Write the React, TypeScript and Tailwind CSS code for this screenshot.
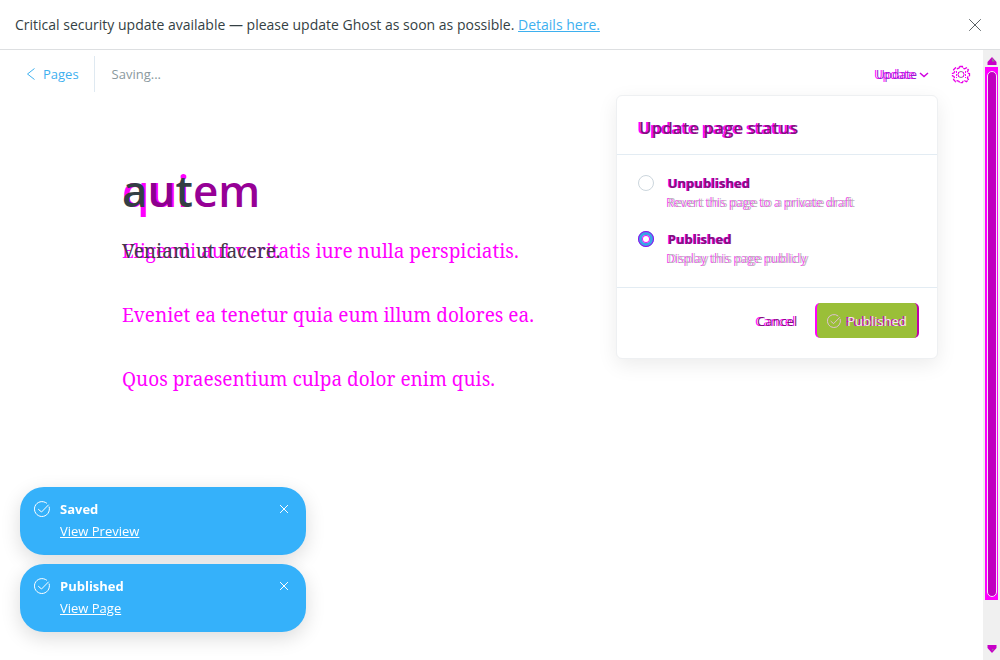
import React from "react";

const sans = "font-['Open_Sans','Noto_Sans',sans-serif]";
const serif = "font-['Noto_Serif','DejaVu_Serif','Liberation_Serif',serif]";

function Cross({ className }: { className: string }) {
  return (
    <svg viewBox="0 0 12 12" fill="none" stroke="currentColor" className={className} aria-hidden="true">
      <path d="M.5.5l11 11M11.5.5l-11 11" strokeLinecap="round" vectorEffect="non-scaling-stroke" />
    </svg>
  );
}

function CheckCircle({ className }: { className: string }) {
  return (
    <svg viewBox="0 0 16 16" fill="none" stroke="currentColor" strokeLinecap="round" strokeLinejoin="round" className={className} aria-hidden="true">
      <path d="M15.2 6A7.5 7.5 0 1 1 12.6 2.1" />
      <path d="M4.5 8.4l3 2.6L14.4 4" />
    </svg>
  );
}

function Gear() {
  return (
    <svg viewBox="0 0 20 20" fill="none" className="size-5" aria-hidden="true">
      <path
        d="M8.6 2.5h2.8l.5 1.700 1.700.7 1.800-1 2 2-1 1.800.7 1.500 1.400.5v2.200l-1.400.5-.7 1.500 1 1.800-2 2-1.800-1-1.700.7-.5 1.300H8.600l-.5-1.300-1.700-.7-1.800 1-2-2 1-1.800-.7-1.500-1.400-.5V9.500l1.400-.5.7-1.500-1-1.800 2-2 1.800 1 1.700-.7z"
        stroke="#e800e8"
        strokeWidth="1.300"
        strokeDasharray="4 1"
      />
      <circle cx="10" cy="10.500" r="3" stroke="#9a60a0" />
      <path d="M5.500 7v7M14.500 7v7M7.500 8v5M12.500 8v5" stroke="#f0f" strokeDasharray="2 1" />
    </svg>
  );
}

function Toast({ title, link }: { title: string; link: string }) {
  return (
    <div className="flex items-start rounded-3xl bg-[#35b1fa] px-3.5 pt-[11px] pb-[13px] text-white shadow-[0_6px_20px_rgba(0,0,0,0.14)]">
      <CheckCircle className="mt-[3px] size-4" />
      <div className="ml-2.5 flex-1 text-[13px] leading-[22px]">
        <p className="font-bold">{title}</p>
        <a href="#" className="underline">{link}</a>
      </div>
      <button type="button" aria-label="Dismiss" className="mt-[7px] mr-1">
        <Cross className="size-2" />
      </button>
    </div>
  );
}

function Option({ id, title, text, checked }: { id: string; title: string; text: string; checked?: boolean }) {
  return (
    <div className="flex gap-3.5">
      <input
        type="radio"
        name="status"
        id={id}
        defaultChecked={checked}
        className="mt-px size-4 appearance-none rounded-full border border-[#ccd6dd] bg-white checked:border-4 checked:border-[#3ba4e6] checked:outline checked:outline-[#a000f0] checked:-outline-offset-1 checked:shadow-[inset_0_0_0_1px_#f0f]"
      />
      <label htmlFor={id} className="text-[12px] leading-[19px]">
        <span className="block text-[13px] font-bold text-[#7d147d] [text-shadow:-1px_0_#f0f]">{title}</span>
        <span className="block text-[#bdb8c0] [text-shadow:-2px_0_#f050f0]">{text}</span>
      </label>
    </div>
  );
}

function StatusMenu() {
  return (
    <form className="absolute top-full right-0 mt-[3px] w-[322px] rounded-md border border-[#eef0f2] bg-white shadow-[0_6px_20px_rgba(0,0,0,0.08)]">
      <h2 className="border-b border-[#e3ecf3] px-[22px] pt-5 pb-3.5 text-[17px] leading-6 font-semibold text-[#7d147d] [text-shadow:-2px_0_#f0f]">
        Update page status
      </h2>
      <div className="flex flex-col gap-[18px] px-[21px] py-[19px]">
        <Option id="unpublished" title="Unpublished" text="Revert this page to a private draft" />
        <Option id="published" title="Published" text="Display this page publicly" checked />
      </div>
      <div className="flex items-center justify-end gap-[18px] border-t border-[#e3ecf3] px-[18px] pt-[15px] pb-5 text-[13px]">
        <button type="button" className="text-[#7d147d] [text-shadow:-2px_0_#f0f]">Cancel</button>
        <button type="button" className="flex h-[35px] items-center gap-1.5 rounded-[5px] border-x-2 border-r-[#c000a8] border-l-[#f0f] bg-[#9abf38] px-2.5 text-[#f4e6f4] [text-shadow:-2px_0_#d000c0]">
          <CheckCircle className="size-3.5 text-[#e8c0e8]" />
          Published
        </button>
      </div>
    </form>
  );
}

function Scrollbar() {
  return (
    <div className="flex w-[17px] flex-col items-center bg-[#f0f0f0]" aria-hidden="true">
      <svg viewBox="0 0 10 8" className="mt-[7px] mb-0.5 h-2 w-2.5"><path d="M5 0l4.500 5v3h-9V5z" fill="#c800c8" /><path d="M5 1l3 3.500H5z" fill="#888" /></svg>
      <div className="flex w-[13px] flex-[532] flex-col items-center bg-[#f0f] pt-1 pb-[3px]">
        <div className="w-2.5 flex-1 rounded-full border border-[#f5e8f5] bg-[#c000c0]" />
      </div>
      <div className="flex-[46]" />
      <svg viewBox="0 0 10 8" className="mb-[7px] h-2 w-2.5"><path d="M.5 0h9v3L5 8 .5 3z" fill="#c800c8" /><path d="M5 4h2L5 6z" fill="#888" /></svg>
    </div>
  );
}

export default function App() {
  return (
    <div className={`${sans} flex min-h-screen flex-col bg-white text-[#343f44]`}>
      <div className="flex items-center justify-between border-b border-[#dddfe1] py-3 pr-[19px] pl-[15px] text-[14px] leading-[25px]">
        <p>
          Critical security update available — please update Ghost as soon as possible.{" "}
          <a href="#" className="text-[#3eb0ef] underline">Details here.</a>
        </p>
        <button type="button" aria-label="Close"><Cross className="size-3 text-[#5b6266]" /></button>
      </div>
      <div className="flex flex-1">
        <main className="min-w-0 flex-1">
          <header className="flex items-center pt-1.5 text-[13px] leading-5">
            <a href="#" className="flex h-9 items-center gap-2 border-r border-[#dfe9f1] pr-[15px] pl-[27px] text-[#3eb0ef]">
              <svg viewBox="0 0 8 12" fill="none" stroke="currentColor" className="h-3 w-2" aria-hidden="true"><path d="M7.500.5l-7 5.500 7 5.500" /></svg>
              Pages
            </a>
            <span className="flex-1 pl-[17px] text-[#8a999e]">Saving...</span>
            <div className="relative mr-[45px]">
              <button type="button" className="mr-[9px] flex h-9 items-center gap-0.5 pt-0.5 text-[12px] text-[#9020d0] [text-shadow:-2px_0_#f0f]">
                Update
                <svg viewBox="0 0 10 6" fill="none" stroke="#d000e0" strokeWidth="1.500" className="h-1.5 w-2.5" aria-hidden="true"><path d="M1 1l4 3.500L9 1" /></svg>
              </button>
              <StatusMenu />
            </div>
            <button type="button" aria-label="Settings" className="-ml-8 mr-3"><Gear /></button>
          </header>
          <article className="px-[122px] pt-[68px]">
            <h1 className="grid text-[44px] leading-[60px] font-semibold">
              <span className="[grid-area:1/1] text-[#f0f]">qui</span>
              <span className="[grid-area:1/1]">a<span className="text-[#8d008d]">u</span>t<span className="text-[#960096]">em</span></span>
            </h1>
            <div className={`${serif} mt-[15px] text-[19px] leading-8 text-[#f0f]`}>
              <div className="grid">
                <p className="[grid-area:1/1]">Eligendi aut veritatis iure nulla perspiciatis.</p>
                <p className="[grid-area:1/1] text-[#443a4a]">Veniam ut facere.</p>
              </div>
              <p className="mt-8">Eveniet ea tenetur quia eum illum dolores ea.</p>
              <p className="mt-8">Quos praesentium culpa dolor enim quis.</p>
            </div>
          </article>
        </main>
        <Scrollbar />
      </div>
      <div className="fixed bottom-7 left-5 flex w-[286px] flex-col gap-[9px]">
        <Toast title="Saved" link="View Preview" />
        <Toast title="Published" link="View Page" />
      </div>
    </div>
  );
}
